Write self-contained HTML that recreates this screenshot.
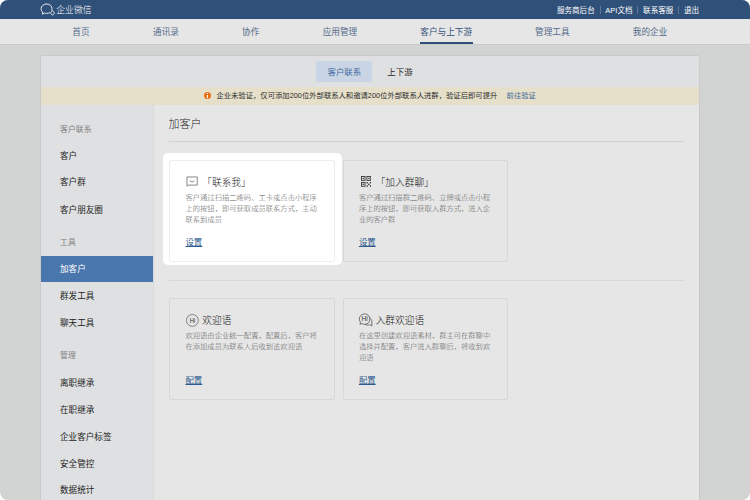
<!DOCTYPE html>
<html lang="zh-CN">
<head>
<meta charset="utf-8">
<title>企业微信</title>
<style>
*{margin:0;padding:0;box-sizing:border-box}
html,body{width:750px;height:500px;overflow:hidden;background:#fff}
body{font-family:"Liberation Sans","Noto Sans CJK SC",sans-serif;color:#2a2a2a;-webkit-font-smoothing:antialiased}
#page{position:absolute;left:0;top:0;width:750px;height:500px;overflow:hidden;background:#d2d4d3;border-radius:8px}
.abs{position:absolute;white-space:nowrap}
/* top bar */
#top{position:absolute;left:0;top:0;width:750px;height:18.8px;background:#2f5079}
#logo-text{left:56.2px;top:0;height:18.8px;line-height:21px;font-size:8.9px;color:#fff;font-weight:300}
#toplinks{right:51px;top:0;height:18.8px;line-height:21.8px;font-size:7.55px;color:#fff}
#toplinks i{font-style:normal;display:inline-block;width:1px;height:8px;background:#5d7799;margin:0 4.7px 0 4.9px;vertical-align:-1.3px}
/* nav */
#nav{position:absolute;left:0;top:18.8px;width:750px;height:26.2px;background:#e6e6e6;border-bottom:1px solid #c7c9ca}
#nav span{position:absolute;top:0;height:25px;line-height:26.2px;font-size:8.65px;color:#536a8a;transform:translateX(-50%);white-space:nowrap}
#nav span.on{color:#2f5079}
#nav b{position:absolute;left:419.6px;top:22.9px;width:53.2px;height:2px;background:#2f5079}
/* container */
#wrap{position:absolute;left:41px;top:56px;width:658px;height:460px;background:#e6e6e6;border-radius:1.5px 1.5px 0 0;overflow:hidden;box-shadow:0 0 1.6px rgba(0,0,0,0.22)}
#tabs{position:absolute;left:0;top:0;width:658px;height:30.6px;background:#dfe0e1}
#pill{left:275.2px;top:4.9px;width:56.3px;height:20.8px;line-height:22.6px;border-radius:2px;background:#c9d4e4;color:#466ca3;font-size:8.45px;text-align:center}
#tab2{left:346.3px;top:4.9px;height:20.6px;line-height:22.6px;font-size:8.45px;color:#1f1f1f}
#banner{position:absolute;left:0;top:30.6px;width:658px;height:18.5px;background:#e6e0cb}
#banner .ico{position:absolute;left:162.6px;top:5.6px;width:7px;height:7px;border-radius:50%;background:#e8721c}
#banner .ico:before{content:"";position:absolute;left:3px;top:1.2px;width:1px;height:1px;background:#fff}
#banner .ico:after{content:"";position:absolute;left:3px;top:2.9px;width:1px;height:2.8px;background:#fff}
#btxt{left:175.4px;top:0;height:18.5px;line-height:18.6px;font-size:7.33px;color:#2d2d2d}
#blink{left:465.6px;top:0;height:18.5px;line-height:18.6px;font-size:7.3px;color:#3b6594}
/* sidebar */
#side{position:absolute;left:0;top:49.1px;width:112.6px;height:420px;background:#dfe0e1;border-right:1px solid #d8d9db}
#side .g{position:absolute;left:19px;font-size:7.9px;color:#7f8082;height:14px;line-height:14px;white-space:nowrap}
#side .it{position:absolute;left:0;width:111.8px;height:26.7px;line-height:28.1px;padding-left:19px;font-size:8.58px;color:#1d1d1d;white-space:nowrap}
#side .it.on{background:#4977ad;color:#fff}
/* main */
#title{left:127.6px;top:59.9px;font-weight:300;font-size:10.9px;line-height:16px;height:16px;color:#262626}
.hr{position:absolute;left:128px;width:515px;height:1px}
.card{position:absolute;width:165.4px;height:101.5px;border:1px solid #d6d7d9;border-radius:2px}
.card .t{left:32px;top:13.6px;height:16px;line-height:16px;font-size:9.7px;color:#222;font-weight:300}
.card .d{position:absolute;left:15.2px;top:30.8px;font-weight:300;width:140px;white-space:nowrap;font-size:7.3px;line-height:11px;color:#5c5c5c}
.card .a{left:15.2px;top:73.6px;font-size:8.4px;line-height:14px;height:14px;color:#2c5a8d;text-decoration:underline;text-decoration-thickness:0.6px;text-underline-offset:0.6px}
.card svg{position:absolute}
#hl{position:absolute;left:122px;top:96.9px;width:179.2px;height:112px;background:#fff;border-radius:5px}
</style>
</head>
<body>
<div id="page">
  <div id="top">
    <svg class="abs" style="left:40px;top:3.4px" width="16" height="14" viewBox="0 0 16 14" fill="none" stroke="#fff" stroke-width="0.9">
      <path d="M9.9 9.6 C8.9 10.1 7.8 10.4 6.6 10.4 C5.8 10.4 5 10.3 4.3 10 L2.3 11.2 L2.7 9.1 C1.7 8.2 1.1 7 1.1 5.7 C1.1 3.1 3.6 1 6.6 1 C9.6 1 12.1 3.1 12.1 5.7 C12.1 6.4 11.9 7.1 11.6 7.7"/>
      <path d="M12.5 7.7 L14.6 10 L12.5 12.3 L10.4 10 Z" stroke-width="0.8"/>
    </svg>
    <div id="logo-text" class="abs">企业微信</div>
    <div id="toplinks" class="abs">服务商后台<i></i>API文档<i></i>联系客服<i></i>退出</div>
  </div>
  <div id="nav">
    <span style="left:81px">首页</span>
    <span style="left:166px">通讯录</span>
    <span style="left:250.7px">协作</span>
    <span style="left:339.9px">应用管理</span>
    <span class="on" style="left:446.2px">客户与上下游</span>
    <span style="left:552.3px">管理工具</span>
    <span style="left:650.1px">我的企业</span>
    <b></b>
  </div>
  <div id="wrap">
    <div id="tabs">
      <div id="pill" class="abs">客户联系</div>
      <div id="tab2" class="abs">上下游</div>
    </div>
    <div id="banner">
      <div class="ico"></div>
      <div id="btxt" class="abs">企业未验证，仅可添加200位外部联系人和邀请200位外部联系人进群，验证后即可提升</div>
      <div id="blink" class="abs">前往验证</div>
    </div>
    <div id="side">
      <div class="g" style="top:17.9px">客户联系</div>
      <div class="it" style="top:36.9px">客户</div>
      <div class="it" style="top:63.1px">客户群</div>
      <div class="it" style="top:91.1px">客户朋友圈</div>
      <div class="g" style="top:130.9px">工具</div>
      <div class="it on" style="top:150.6px;height:26.2px;line-height:27.3px">加客户</div>
      <div class="it" style="top:177.4px">群发工具</div>
      <div class="it" style="top:204.2px">聊天工具</div>
      <div class="g" style="top:244px">管理</div>
      <div class="it" style="top:263.7px">离职继承</div>
      <div class="it" style="top:290.9px">在职继承</div>
      <div class="it" style="top:317.7px">企业客户标签</div>
      <div class="it" style="top:344.8px">安全管控</div>
      <div class="it" style="top:371.4px">数据统计</div>
    </div>
    <div id="title" class="abs">加客户</div>
    <div class="hr" style="top:84.9px;background:#cfd3d9"></div>
    <div id="hl"></div>
    <div class="card" style="left:128.3px;top:104.2px;border-color:#eeeeee;background:#fff">
      <svg style="left:16.2px;top:15px" width="12.6" height="11.63" viewBox="0 0 13 12" fill="none" stroke="#666" stroke-width="0.8">
        <path d="M1 1 H11.6 V9.4 H2.3 L1 10.6 Z" stroke-linejoin="round"/>
        <path d="M3.9 5 Q6.3 7.4 8.7 5" stroke-width="0.8"/>
      </svg>
      <div class="t abs">「联系我」</div>
      <div class="d">客户通过扫描二维码、工卡或点击小程序<br>上的按钮，即可获取成员联系方式，主动<br>联系到成员</div>
      <div class="a abs">设置</div>
    </div>
    <div class="card" style="left:301.7px;top:104.2px">
      <svg style="left:17.1px;top:15px" width="10.2" height="10.8" viewBox="0 0 20 21" fill="none" stroke="#333" stroke-width="1.7">
        <rect x="0.9" y="0.9" width="7" height="7.6"/><rect x="11.6" y="0.9" width="7.5" height="7.6"/><rect x="0.9" y="12.5" width="7" height="7.6"/>
        <g fill="#333" stroke="none"><rect x="3.2" y="3.4" width="2.4" height="2.6"/><rect x="14.1" y="3.4" width="2.5" height="2.6"/><rect x="3.2" y="15" width="2.4" height="2.6"/>
        <rect x="10.8" y="11.7" width="2.7" height="2.7"/><rect x="17.3" y="11.7" width="2.7" height="2.7"/><rect x="14" y="14.9" width="2.8" height="2.8"/><rect x="10.8" y="18.2" width="2.7" height="2.7"/><rect x="17.3" y="18.2" width="2.7" height="2.7"/></g>
      </svg>
      <div class="t abs">「加入群聊」</div>
      <div class="d">客户通过扫描群二维码、立牌或点击小程<br>序上的按钮，即可获取入群方式，进入企<br>业的客户群</div>
      <div class="a abs">设置</div>
    </div>
    <div class="hr" style="top:223.5px;background:#d8d8d8"></div>
    <div class="card" style="left:128.3px;top:242.3px">
      <svg style="left:15.2px;top:13.4px" width="15" height="15" viewBox="0 0 15 15" fill="none" stroke="#6a6a6a" stroke-width="0.8">
        <circle cx="7.4" cy="7.4" r="5.95"/>
        <text x="7.5" y="9.9" font-family="Liberation Sans, sans-serif" font-size="7.4" text-anchor="middle" fill="#333" stroke="none" textLength="5.6" lengthAdjust="spacingAndGlyphs">Hi</text>
      </svg>
      <div class="t abs">欢迎语</div>
      <div class="d">欢迎语由企业统一配置，配置后，客户将<br>在添加成员为联系人后收到该欢迎语</div>
      <div class="a abs">配置</div>
    </div>
    <div class="card" style="left:301.7px;top:242.3px">
      <svg style="left:14.6px;top:14.1px" width="16" height="15" viewBox="0 0 16 15" fill="none" stroke="#5c5c5c" stroke-width="0.85">
        <path d="M11.4 4.6 C13 5.6 13.9 7.2 13.9 8.9 V12.8 L11.6 11.7 C10.3 12.3 8.4 12.2 7.1 11.5"/>
        <path d="M6.6 0.9 C9.6 0.9 11.9 3.2 11.9 6.1 C11.9 9 9.6 11.3 6.6 11.3 C5.6 11.3 4.7 11.1 3.9 10.6 L1.9 11.2 L2.6 9.4 C1.8 8.5 1.3 7.4 1.3 6.1 C1.3 3.2 3.6 0.9 6.6 0.9 Z"/>
        <text x="6.7" y="8.3" font-family="Liberation Sans, sans-serif" font-size="6.6" text-anchor="middle" fill="#2e2e2e" stroke="none">Hi</text>
      </svg>
      <div class="t abs">入群欢迎语</div>
      <div class="d">在这里创建欢迎语素材，群主可在群聊中<br>选择并配置，客户进入群聊后，将收到欢<br>迎语</div>
      <div class="a abs">配置</div>
    </div>
  </div>
</div>
</body>
</html>
